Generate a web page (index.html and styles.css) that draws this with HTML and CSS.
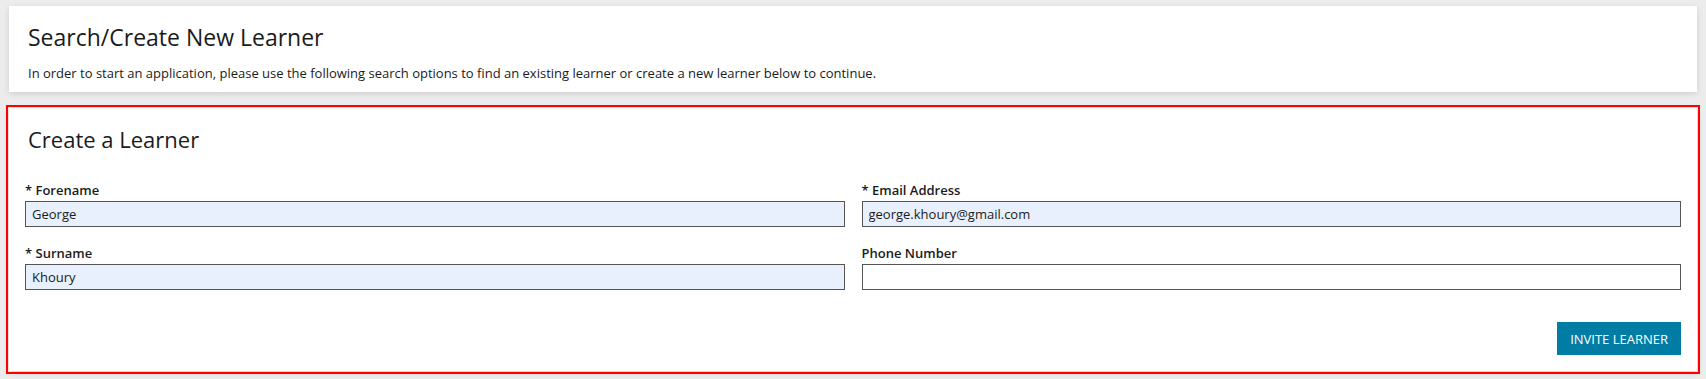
FILE: index.html
```html
<!DOCTYPE html>
<html lang="en">
<head>
  <meta charset="UTF-8">
  <meta name="viewport" content="width=device-width, initial-scale=1.0">
  <title>Search/Create New Learner</title>
  <link rel="stylesheet" href="styles.css">
</head>
<body>
  <main class="page">
    <!-- Intro -->
    <section class="card intro">
      <h1>Search/Create New Learner</h1>
      <p>In order to start an application, please use the following search options to find an existing learner or create a new learner below to continue.</p>
    </section>

    <!-- Create form -->
    <section class="card create">
      <h2>Create a Learner</h2>
      <form class="learner-form">
        <div class="field">
          <label for="forename">* Forename</label>
          <input type="text" id="forename" class="filled" value="George">
        </div>
        <div class="field">
          <label for="email">* Email Address</label>
          <input type="email" id="email" class="filled" value="george.khoury@gmail.com">
        </div>
        <div class="field">
          <label for="surname">* Surname</label>
          <input type="text" id="surname" class="filled" value="Khoury">
        </div>
        <div class="field">
          <label for="phone">Phone Number</label>
          <input type="text" id="phone">
        </div>
        <div class="actions">
          <button type="button" class="btn-invite">INVITE LEARNER</button>
        </div>
      </form>
    </section>
  </main>
</body>
</html>
```

FILE: styles.css
```css
body { margin: 0; background-color: #ececec; font-family: "Open Sans", "Noto Sans", Arial, sans-serif; color: #1b1b1b; }
.page { padding: 6px 9px 8px 9px; display: flex; flex-direction: column; gap: 16px; }
.card { background-color: #fff; box-shadow: 0 2px 6px rgba(0, 0, 0, 0.12); padding: 0 16px; }
.intro { height: 86px; padding-top: 16px; box-sizing: border-box; }
.intro h1 { margin: 0 0 0 3px; font-size: 23px; font-weight: 400; line-height: 30px; }
.intro p { margin: 12px 0 0 3px; font-size: 13px; line-height: 18px; }
.create { outline: 2px solid #ff0000; outline-offset: 1px; padding-top: 16px; padding-bottom: 16px; }
.create h2 { margin: 0 0 0 3px; font-size: 22px; font-weight: 400; line-height: 30px; }
.learner-form { display: grid; grid-template-columns: 1fr 1fr; column-gap: 17px; row-gap: 17px; margin-top: 27px; }
.field label { display: block; font-size: 13px; font-weight: 600; line-height: 18px; margin-bottom: 2px; }
.field input { display: block; width: 100%; box-sizing: border-box; height: 26px; padding: 0 6px; border: 1px solid #555; font-family: inherit; font-size: 13px; color: #1b1b1b; background-color: #fff; }
.field input.filled { background-color: #e8f0fe; }
.actions { grid-column: 1 / 3; display: flex; justify-content: flex-end; margin-top: 15px; }
.btn-invite { background-color: #017ca5; color: #fff; border: none; height: 33px; padding: 0 13px; font-family: inherit; font-size: 13px; cursor: pointer; }
```
